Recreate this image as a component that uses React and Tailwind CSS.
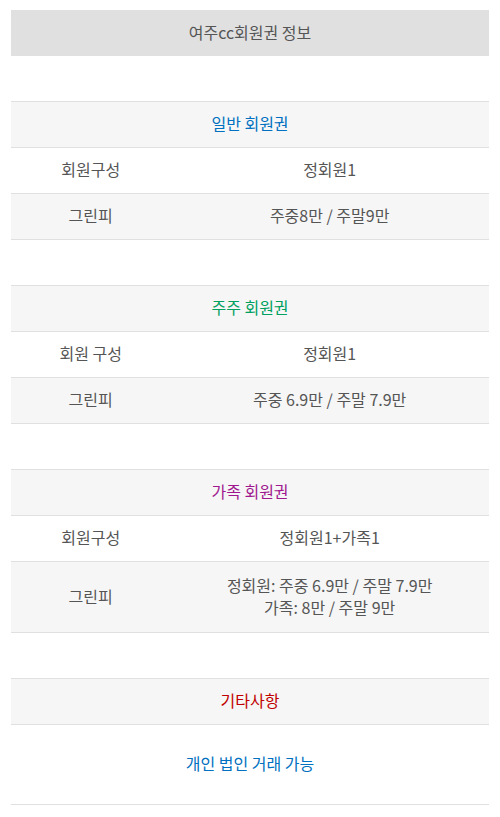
import React from "react";

const sections = [
  {
    title: "일반 회원권",
    color: "text-[#0070c0]",
    rows: [
      { label: "회원구성", value: ["정회원1"] },
      { label: "그린피", value: ["주중8만 / 주말9만"] },
    ],
  },
  {
    title: "주주 회원권",
    color: "text-[#00a060]",
    rows: [
      { label: "회원 구성", value: ["정회원1"] },
      { label: "그린피", value: ["주중 6.9만 / 주말 7.9만"] },
    ],
  },
  {
    title: "가족 회원권",
    color: "text-[#a0188f]",
    rows: [
      { label: "회원구성", value: ["정회원1+가족1"] },
      { label: "그린피", value: ["정회원: 주중 6.9만 / 주말 7.9만", "가족: 8만 / 주말 9만"], tall: true },
    ],
  },
];

function Section({ title, color, rows }) {
  return (
    <div className="mt-[45px] border-t border-[#e0e0e0]">
      <div className={`h-[46px] pb-[3px] flex items-center justify-center bg-[#f6f6f6] border-b border-[#e0e0e0] ${color}`}>
        {title}
      </div>
      {rows.map((r, i) => (
        <div
          key={i}
          className={`grid grid-cols-[1fr_2fr] border-b border-[#e0e0e0] ${r.tall ? "h-[71px]" : "h-[46px]"} ${i % 2 === 1 ? "bg-[#f6f6f6]" : "bg-white"}`}
        >
          <div className="flex items-center justify-center pb-[3px]">{r.label}</div>
          <div className="flex flex-col items-center justify-center pb-[3px]">
            {r.value.map((v, j) => (
              <div key={j}>{v}</div>
            ))}
          </div>
        </div>
      ))}
    </div>
  );
}

export default function App() {
  return (
    <div className="bg-white px-[11px] pt-[10px] pb-[12px] text-[16px] leading-[22px] text-[#555] font-['Noto_Sans_CJK_KR','Noto_Sans',sans-serif]">
      <div className="h-[46px] pb-[3px] flex items-center justify-center bg-[#e0e0e0]">여주cc회원권 정보</div>
      {sections.map((s) => (
        <Section key={s.title} {...s} />
      ))}
      <div className="mt-[45px] border-t border-[#e0e0e0]">
        <div className="h-[46px] pb-[3px] flex items-center justify-center bg-[#f6f6f6] border-b border-[#e0e0e0] text-[#c00000]">
          기타사항
        </div>
        <div className="h-[80px] pb-[3px] flex items-center justify-center border-b border-[#e0e0e0] text-[#0070c0]">
          개인 법인 거래 가능
        </div>
      </div>
    </div>
  );
}
